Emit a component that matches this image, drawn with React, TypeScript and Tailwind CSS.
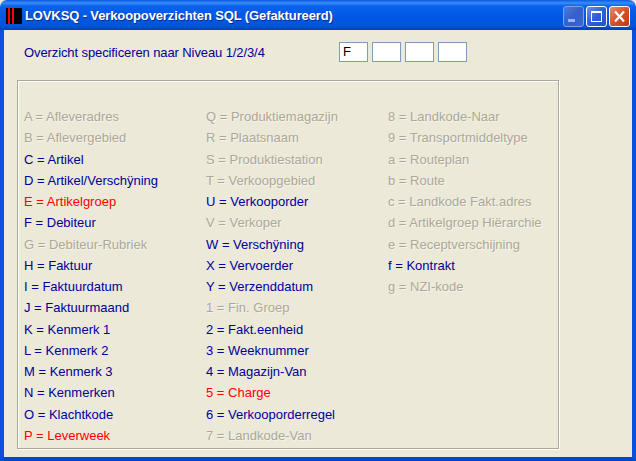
const N = "text-[#000099]";
const G = "text-[#aca899] [text-shadow:1px_1px_0_#ffffff80]";
const R = "text-[#ff0000]";

const columns: [string, string][][] = [
  [
    ["A = Afleveradres", G], ["B = Aflevergebied", G], ["C = Artikel", N], ["D = Artikel/Verschÿning", N],
    ["E = Artikelgroep", R], ["F = Debiteur", N], ["G = Debiteur-Rubriek", G], ["H = Faktuur", N],
    ["I = Faktuurdatum", N], ["J = Faktuurmaand", N], ["K = Kenmerk 1", N], ["L = Kenmerk 2", N],
    ["M = Kenmerk 3", N], ["N = Kenmerken", N], ["O = Klachtkode", N], ["P = Leverweek", R],
  ],
  [
    ["Q = Produktiemagazijn", G], ["R = Plaatsnaam", G], ["S = Produktiestation", G], ["T = Verkoopgebied", G],
    ["U = Verkooporder", N], ["V = Verkoper", G], ["W = Verschÿning", N], ["X = Vervoerder", N],
    ["Y = Verzenddatum", N], ["1 = Fin. Groep", G], ["2 = Fakt.eenheid", N], ["3 = Weeknummer", N],
    ["4 = Magazijn-Van", N], ["5 = Charge", R], ["6 = Verkooporderregel", N], ["7 = Landkode-Van", G],
  ],
  [
    ["8 = Landkode-Naar", G], ["9 = Transportmiddeltype", G], ["a = Routeplan", G], ["b = Route", G],
    ["c = Landkode Fakt.adres", G], ["d = Artikelgroep Hiërarchie", G], ["e = Receptverschijning", G],
    ["f = Kontrakt", N], ["g = NZI-kode", G],
  ],
];

function WinButton({ kind }: { kind: "min" | "max" | "close" }) {
  const bg =
    kind === "close"
      ? "bg-[linear-gradient(135deg,#e88a6c,#d8512c_50%,#c13a14)] border-white"
      : kind === "max"
      ? "bg-[linear-gradient(135deg,#6a92ee,#2f5fd8_50%,#2350c8)] border-white"
      : "bg-[linear-gradient(135deg,#4f78dc,#3560c8_50%,#3a66d0)] border-[#7f9de6]";
  return (
    <div className={`w-[21px] h-[21px] rounded-[3px] border flex items-center justify-center ${bg}`}>
      {kind === "min" && (
        <svg width="19" height="19" viewBox="0 0 19 19"><rect x="4" y="12" width="7" height="3" fill="#9db4ec" /></svg>
      )}
      {kind === "max" && (
        <svg width="19" height="19" viewBox="0 0 19 19" fill="none">
          <rect x="4.5" y="5.5" width="10" height="9" stroke="white" />
          <rect x="4" y="4" width="11" height="2" fill="white" />
        </svg>
      )}
      {kind === "close" && (
        <svg width="19" height="19" viewBox="0 0 19 19" fill="none">
          <path d="M5 4.5 L14 14.5 M14 4.5 L5 14.5" stroke="white" strokeWidth="2.2" />
        </svg>
      )}
    </div>
  );
}

function Box({ value }: { value?: string }) {
  return (
    <div className="w-[29px] h-[20px] bg-white border border-[#7f9db9] pl-[3px] text-[13px] leading-[18px] text-black">
      {value}
    </div>
  );
}

export default function App() {
  return (
    <div className="w-[636px] h-[461px] flex flex-col overflow-hidden bg-[#ece9d8] font-['Liberation_Sans',sans-serif]">
      <div className="h-[30px] shrink-0 flex items-center pt-[2px] pl-[6px] pr-[6px] rounded-t-[7px] bg-[linear-gradient(180deg,#0a5ae0_0px,#3a8cf8_3px,#0a62ec_6px,#0058e6_16px,#0054dc_26px,#0040b8_30px)]">
        <div className="w-[16px] h-[16px] bg-black flex gap-[2px] pl-[2px] shrink-0">
          <div className="w-[2px] h-full bg-[#ff0000]" />
          <div className="w-[2px] h-full bg-[#ff0000]" />
        </div>
        <div className="ml-[3px] text-white font-bold text-[13px] tracking-[-0.12px] [text-shadow:1px_1px_0_#0a2f8c]">
          LOVKSQ - Verkoopoverzichten SQL (Gefaktureerd)
        </div>
        <div className="ml-auto flex gap-[2px]">
          <WinButton kind="min" />
          <WinButton kind="max" />
          <WinButton kind="close" />
        </div>
      </div>
      <div className="flex-1 flex flex-col border-x-[4px] border-b-[4px] border-x-[#0a50dc] border-b-[#0a46c8] pl-[13px]">
        <div className="flex items-center h-[20px] mt-[12px]">
          <div className="w-[322px] pl-[7px] pt-[1px] text-[13px] tracking-[-0.1px] text-[#000099]">Overzicht specificeren naar Niveau 1/2/3/4</div>
          <div className="flex gap-[4px]">
            <Box value="F" />
            <Box />
            <Box />
            <Box />
          </div>
        </div>
        <div className="mt-[18px] w-[542px] h-[369px] border border-[#aca899] shadow-[inset_1px_1px_0_#fff,1px_1px_0_#fff] flex pl-[6px] pt-[25px]">
          {columns.map((col, i) => (
            <div key={i} className="w-[182px] shrink-0 flex flex-col">
              {col.map(([label, color]) => (
                <div key={label} className={`h-[21.27px] leading-[21px] text-[13px] whitespace-nowrap ${color}`}>
                  {label}
                </div>
              ))}
            </div>
          ))}
        </div>
      </div>
    </div>
  );
}
